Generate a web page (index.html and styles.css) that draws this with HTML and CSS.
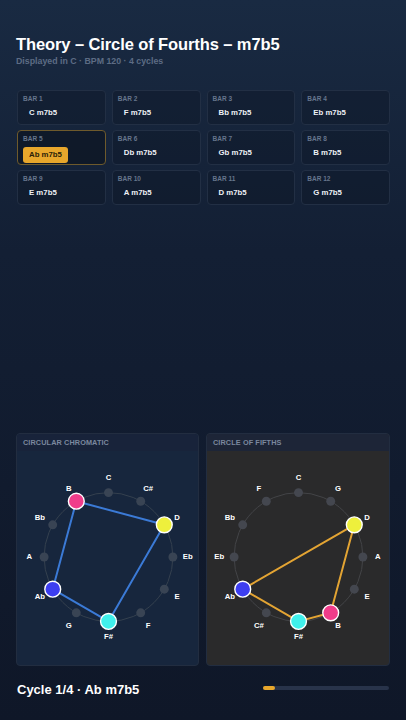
FILE: index.html
```html
<!DOCTYPE html>
<html>
<head>
<meta charset="utf-8">
<link rel="stylesheet" href="styles.css">
</head>
<body>
<div class="app">
  <header class="head">
    <h1 class="title">Theory – Circle of Fourths – m7b5</h1>
    <div class="sub">Displayed in C · BPM 120 · 4 cycles</div>
  </header>

  <div class="bars">
    <div class="bar"><div class="bar-label">BAR 1</div><div class="chord">C m7b5</div></div>
    <div class="bar"><div class="bar-label">BAR 2</div><div class="chord">F m7b5</div></div>
    <div class="bar"><div class="bar-label">BAR 3</div><div class="chord">Bb m7b5</div></div>
    <div class="bar"><div class="bar-label">BAR 4</div><div class="chord">Eb m7b5</div></div>
    <div class="bar active"><div class="bar-label">BAR 5</div><div class="chord">Ab m7b5</div></div>
    <div class="bar"><div class="bar-label">BAR 6</div><div class="chord">Db m7b5</div></div>
    <div class="bar"><div class="bar-label">BAR 7</div><div class="chord">Gb m7b5</div></div>
    <div class="bar"><div class="bar-label">BAR 8</div><div class="chord">B m7b5</div></div>
    <div class="bar"><div class="bar-label">BAR 9</div><div class="chord">E m7b5</div></div>
    <div class="bar"><div class="bar-label">BAR 10</div><div class="chord">A m7b5</div></div>
    <div class="bar"><div class="bar-label">BAR 11</div><div class="chord">D m7b5</div></div>
    <div class="bar"><div class="bar-label">BAR 12</div><div class="chord">G m7b5</div></div>
  </div>

  <div class="panels">
    <section class="panel chromatic">
      <div class="panel-head">CIRCULAR CHROMATIC</div>
      <svg class="wheel" viewBox="0 0 183 216" width="183" height="216">
        <circle class="ring" cx="91.5" cy="107" r="65"/>
        <polygon class="shape blue" points="147.8,74.5 91.5,172 35.2,139.5 59,50.7"/>
        <g class="dots">
          <circle cx="91.5" cy="42" r="4.5"/>
          <circle cx="124" cy="50.7" r="4.5"/>
          <circle cx="156.5" cy="107" r="4.5"/>
          <circle cx="147.8" cy="139.5" r="4.5"/>
          <circle cx="124" cy="163.3" r="4.5"/>
          <circle cx="59" cy="163.3" r="4.5"/>
          <circle cx="26.5" cy="107" r="4.5"/>
          <circle cx="35.2" cy="74.5" r="4.5"/>
        </g>
        <g class="on">
          <circle cx="147.8" cy="74.5" r="8" fill="#eef03c"/>
          <circle cx="91.5" cy="172" r="8" fill="#40f0ec"/>
          <circle cx="35.2" cy="139.5" r="8" fill="#3d3ef0"/>
          <circle cx="59" cy="50.7" r="8" fill="#f03c8a"/>
        </g>
        <g class="labels">
          <text x="91.5" y="27">C</text>
          <text x="131.5" y="37.7">C#</text>
          <text x="160.8" y="67">D</text>
          <text x="171.5" y="107">Eb</text>
          <text x="160.8" y="147">E</text>
          <text x="131.5" y="176.3">F</text>
          <text x="91.5" y="187">F#</text>
          <text x="51.5" y="176.3">G</text>
          <text x="22.2" y="147">Ab</text>
          <text x="11.5" y="107">A</text>
          <text x="22.2" y="67">Bb</text>
          <text x="51.5" y="37.7">B</text>
        </g>
      </svg>
    </section>

    <section class="panel fifths">
      <div class="panel-head">CIRCLE OF FIFTHS</div>
      <svg class="wheel" viewBox="0 0 183 216" width="183" height="216">
        <circle class="ring" cx="91.5" cy="107" r="65"/>
        <polygon class="shape orange" points="147.8,74.5 124,163.3 91.5,172 35.2,139.5"/>
        <g class="dots">
          <circle cx="91.5" cy="42" r="4.5"/>
          <circle cx="124" cy="50.7" r="4.5"/>
          <circle cx="156.5" cy="107" r="4.5"/>
          <circle cx="147.8" cy="139.5" r="4.5"/>
          <circle cx="59" cy="163.3" r="4.5"/>
          <circle cx="26.5" cy="107" r="4.5"/>
          <circle cx="35.2" cy="74.5" r="4.5"/>
          <circle cx="59" cy="50.7" r="4.5"/>
        </g>
        <g class="on">
          <circle cx="147.8" cy="74.5" r="8" fill="#eef03c"/>
          <circle cx="124" cy="163.3" r="8" fill="#f03c8a"/>
          <circle cx="91.5" cy="172" r="8" fill="#40f0ec"/>
          <circle cx="35.2" cy="139.5" r="8" fill="#3d3ef0"/>
        </g>
        <g class="labels">
          <text x="91.5" y="27">C</text>
          <text x="131.5" y="37.7">G</text>
          <text x="160.8" y="67">D</text>
          <text x="171.5" y="107">A</text>
          <text x="160.8" y="147">E</text>
          <text x="131.5" y="176.3">B</text>
          <text x="91.5" y="187">F#</text>
          <text x="51.5" y="176.3">C#</text>
          <text x="22.2" y="147">Ab</text>
          <text x="11.5" y="107">Eb</text>
          <text x="22.2" y="67">Bb</text>
          <text x="51.5" y="37.7">F</text>
        </g>
      </svg>
    </section>
  </div>

  <footer class="foot">
    <div class="status">Cycle 1/4 · Ab m7b5</div>
    <div class="progress"><div class="fill" style="width: 12px"></div></div>
  </footer>
</div>
</body>
</html>
```

FILE: styles.css
```css
* { box-sizing: border-box; }
html, body { margin: 0; padding: 0; }
body {
  width: 406px;
  height: 720px;
  overflow: hidden;
  font-family: "Liberation Sans", Arial, sans-serif;
  background: linear-gradient(180deg, #192a42 0%, #131f34 35%, #0f1728 100%);
  color: #fff;
}
.app {
  height: 720px;
  padding: 0 16px;
  display: flex;
  flex-direction: column;
}
.head { padding-top: 35px; }
.title {
  margin: 0;
  font-size: 16.5px;
  line-height: 18px;
  font-weight: 700;
  color: #fff;
  letter-spacing: -0.1px;
}
.sub {
  margin-top: 3px;
  font-size: 8.8px;
  line-height: 11px;
  font-weight: 700;
  color: #5d6c84;
}
.bars {
  margin-top: 23px;
  display: grid;
  grid-template-columns: repeat(4, 1fr);
  gap: 5px 6px;
  margin-left: 1px;
  margin-right: 0;
}
.bar {
  height: 35px;
  border: 1px solid #222f44;
  border-radius: 4px;
  background: rgba(12, 19, 33, 0.35);
  padding: 4px 5px 0 5px;
}
.bar-label {
  font-size: 6.5px;
  line-height: 8px;
  font-weight: 700;
  color: #66758c;
}
.chord {
  margin-top: 5px;
  padding-left: 6px;
  font-size: 7.8px;
  line-height: 10px;
  font-weight: 700;
  color: #eef1f6;
}
.bar.active {
  border-color: #6e5a2c;
  background: rgba(12, 18, 30, 0.6);
}
.bar.active .chord {
  display: inline-block;
  margin-top: 2px;
  padding: 3px 6px;
  background: #e8a72c;
  color: #2a1d08;
  border-radius: 3px;
}
.panels {
  margin-top: auto;
  display: grid;
  grid-template-columns: 183px 184px;
  gap: 7px;
  height: 233px;
}
.panel {
  border: 1px solid #222d40;
  border-radius: 4px;
  overflow: hidden;
  display: flex;
  flex-direction: column;
}
.panel-head {
  height: 17px;
  padding-left: 6px;
  font-size: 7.3px;
  line-height: 17px;
  font-weight: 700;
  color: #7b889e;
  letter-spacing: 0.1px;
}
.chromatic { background: #17263d; }
.chromatic .panel-head { background: #18233a; }
.fifths { background: #2a2a2b; }
.fifths .panel-head { background: #1d2537; }
.wheel { display: block; }
.ring { fill: none; stroke: #36414f; stroke-width: 1; }
.fifths .ring { stroke: #444548; }
.shape { fill: none; stroke-width: 2; stroke-linejoin: round; }
.shape.blue { stroke: #3b7ad6; }
.shape.orange { stroke: #e3a433; }
.dots circle { fill: #394454; }
.fifths .dots circle { fill: #44474f; }
.on circle { stroke: #fff; stroke-width: 1.4; }
.labels text {
  fill: #fff;
  font-family: "Liberation Sans", Arial, sans-serif;
  font-weight: 700;
  font-size: 7.8px;
  text-anchor: middle;
  dominant-baseline: central;
}
.foot {
  height: 54px;
  display: flex;
  align-items: center;
  justify-content: space-between;
  padding-bottom: 8px;
}
.status {
  font-size: 13px;
  font-weight: 700;
  color: #fff;
  margin-left: 1px;
}
.progress {
  width: 126px;
  height: 4px;
  border-radius: 2px;
  background: #28334a;
  margin-right: 1px;
  margin-top: -2px;
}
.fill {
  height: 4px;
  border-radius: 2px;
  background: #e8a72c;
}
```
